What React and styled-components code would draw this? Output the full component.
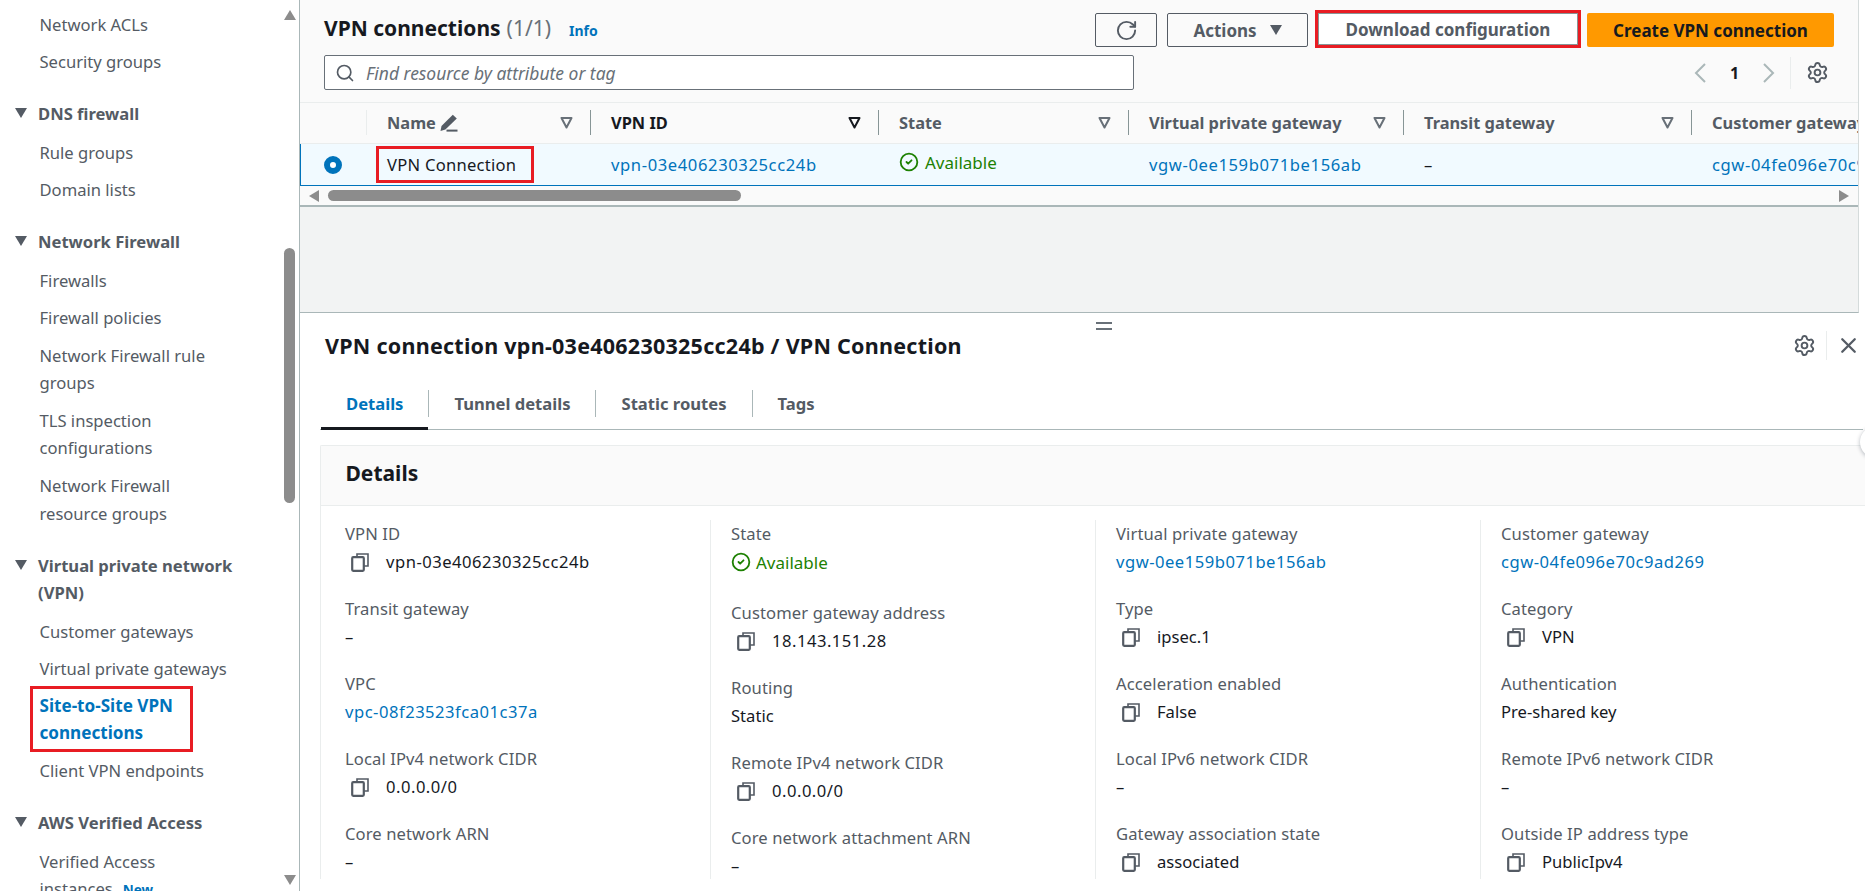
import React from "react";
import styled, { createGlobalStyle } from "styled-components";
import { Settings, RotateCw, Search, X, CircleCheck } from "lucide-react";

const GlobalStyle = createGlobalStyle`
  html, body {
    margin: 0;
    height: 100%;
    overflow: hidden;
    background: #fff;
    font-family: "Noto Sans", "Open Sans", sans-serif;
    font-size: 16.6px;
    color: #16191f;
  }
  * { box-sizing: border-box; }
`;

const tableColumns = "67px 224px 288px 250px 275px 288px 300px";

const navSections = [
  { items: ["Network ACLs", "Security groups"] },
  { title: "DNS firewall", items: ["Rule groups", "Domain lists"] },
  {
    title: "Network Firewall",
    items: ["Firewalls", "Firewall policies", "Network Firewall rule groups", "TLS inspection configurations", "Network Firewall resource groups"],
  },
  {
    title: "Virtual private network (VPN)",
    items: ["Customer gateways", "Virtual private gateways", { label: "Site-to-Site VPN connections", active: true }, "Client VPN endpoints"],
  },
  { title: "AWS Verified Access", items: [{ label: "Verified Access instances", isNew: true }] },
];

const detailColumns = [
  [
    { label: "VPN ID", value: "vpn-03e406230325cc24b", copy: true },
    { label: "Transit gateway", value: "–" },
    { label: "VPC", value: "vpc-08f23523fca01c37a", link: true },
    { label: "Local IPv4 network CIDR", value: "0.0.0.0/0", copy: true },
    { label: "Core network ARN", value: "–" },
  ],
  [
    { label: "State", value: "Available", status: true },
    { label: "Customer gateway address", value: "18.143.151.28", copy: true },
    { label: "Routing", value: "Static" },
    { label: "Remote IPv4 network CIDR", value: "0.0.0.0/0", copy: true },
    { label: "Core network attachment ARN", value: "–" },
  ],
  [
    { label: "Virtual private gateway", value: "vgw-0ee159b071be156ab", link: true },
    { label: "Type", value: "ipsec.1", copy: true },
    { label: "Acceleration enabled", value: "False", copy: true },
    { label: "Local IPv6 network CIDR", value: "–" },
    { label: "Gateway association state", value: "associated", copy: true },
  ],
  [
    { label: "Customer gateway", value: "cgw-04fe096e70c9ad269", link: true },
    { label: "Category", value: "VPN", copy: true },
    { label: "Authentication", value: "Pre-shared key" },
    { label: "Remote IPv6 network CIDR", value: "–" },
    { label: "Outside IP address type", value: "PublicIpv4", copy: true },
  ],
];

const hasManyDigits = (value) => (value.match(/\d/g) || []).length > 2;

const CopyIcon = () => (
  <CopySvg viewBox="0 0 18 20" width="18" height="20">
    <path d="M6 5V2h11v12h-4" fill="none" stroke="#545b64" strokeWidth="1.6" />
    <rect x="1.2" y="5.2" width="11.6" height="13.6" rx="1" fill="none" stroke="#545b64" strokeWidth="2.2" />
  </CopySvg>
);

const Caret = () => (
  <svg viewBox="0 0 12 10" width="12" height="10">
    <polygon points="0,0 12,0 6,10" fill="#545b64" />
  </svg>
);

const FilterIcon = ({ active }) => (
  <svg viewBox="0 0 13 12" width="13" height="12">
    <polygon points="1.5,1 11.5,1 6.5,10.5" fill="none" stroke={active ? "#16191f" : "#687078"} strokeWidth="2" strokeLinejoin="round" />
  </svg>
);

const PencilIcon = () => (
  <svg viewBox="0 0 18 18" width="18" height="18">
    <path d="M0.5 17l1-5L12.8 0.8l4 3.6L5.4 15.6z" fill="#545b64" />
    <rect x="6.5" y="15.6" width="11" height="2" fill="#545b64" />
  </svg>
);

const Chevron = ({ dir }) => (
  <svg viewBox="0 0 12 20" width="12" height="20">
    <polyline points={dir === "left" ? "11,1 2,10 11,19" : "1,1 10,10 1,19"} fill="none" stroke="#aab7b8" strokeWidth="2" />
  </svg>
);

const Triangle = ({ dir }) => {
  const points = { up: "6,0 12,10 0,10", down: "0,0 12,0 6,10", left: "10,0 10,12 0,6", right: "0,0 10,6 0,12" };
  const wide = dir === "up" || dir === "down";
  return (
    <svg viewBox={wide ? "0 0 12 10" : "0 0 10 12"} width={wide ? 12 : 10} height={wide ? 10 : 12}>
      <polygon points={points[dir]} fill="#8c8c8c" />
    </svg>
  );
};

const DetailField = ({ field }) => (
  <Field>
    <FieldLabel>{field.label}</FieldLabel>
    {field.status ? (
      <StatusValue>
        <CircleCheck size={20} color="#1d8102" strokeWidth={2.2} />
        Available
      </StatusValue>
    ) : (
      <FieldValue $link={field.link} $copy={field.copy} $digits={hasManyDigits(field.value)}>
        {field.copy && <CopyIcon />}
        <span>{field.value}</span>
      </FieldValue>
    )}
  </Field>
);

const App = () => {
  return (
    <Page>
      <GlobalStyle />
      <Sidebar>
        <NavList>
          {navSections.map((section, i) => (
            <NavSection key={i}>
              {section.title && (
                <NavHeader>
                  <CaretSlot><Caret /></CaretSlot>
                  <span>{section.title}</span>
                </NavHeader>
              )}
              {section.items.map((item) => {
                const label = item.label || item;
                return (
                  <NavItem key={label} $active={item.active}>
                    {label}
                    {item.isNew && <NewTag>New</NewTag>}
                  </NavItem>
                );
              })}
            </NavSection>
          ))}
        </NavList>
        <SideScroll>
          <Triangle dir="up" />
          <SideThumb />
          <Triangle dir="down" />
        </SideScroll>
      </Sidebar>

      <Main>
        <TopPane>
          <ListPanel>
            <PanelHeader>
              <HeaderRow>
                <Title>
                  VPN connections <Count>(1/1)</Count>
                  <InfoLink>Info</InfoLink>
                </Title>
                <Toolbar>
                  <OutlineButton $width={62}><RotateCw size={23} strokeWidth={2} /></OutlineButton>
                  <OutlineButton $width={141}>
                    Actions
                    <Caret />
                  </OutlineButton>
                  <OutlineButton $width={266} $flagged>Download configuration</OutlineButton>
                  <PrimaryButton>Create VPN connection</PrimaryButton>
                </Toolbar>
              </HeaderRow>
              <FilterRow>
                <SearchBox>
                  <Search size={20} color="#545b64" strokeWidth={2} />
                  <SearchInput>Find resource by attribute or tag</SearchInput>
                </SearchBox>
                <Pager>
                  <Chevron dir="left" />
                  <PageNumber>1</PageNumber>
                  <Chevron dir="right" />
                  <PagerDivider />
                  <Settings size={23} color="#545b64" strokeWidth={2} />
                </Pager>
              </FilterRow>
            </PanelHeader>

            <TableHead>
              <HeadCell><CellDivider $light /></HeadCell>
              <HeadCell>
                <HeadLabel>Name</HeadLabel>
                <PencilSlot><PencilIcon /></PencilSlot>
                <FilterSlot><FilterIcon /></FilterSlot>
                <CellDivider />
              </HeadCell>
              <HeadCell>
                <HeadLabel $sorted>VPN ID</HeadLabel>
                <FilterSlot><FilterIcon active /></FilterSlot>
                <CellDivider />
              </HeadCell>
              <HeadCell>
                <HeadLabel>State</HeadLabel>
                <FilterSlot><FilterIcon /></FilterSlot>
                <CellDivider />
              </HeadCell>
              <HeadCell>
                <HeadLabel>Virtual private gateway</HeadLabel>
                <FilterSlot><FilterIcon /></FilterSlot>
                <CellDivider />
              </HeadCell>
              <HeadCell>
                <HeadLabel>Transit gateway</HeadLabel>
                <FilterSlot><FilterIcon /></FilterSlot>
                <CellDivider />
              </HeadCell>
              <HeadCell>
                <HeadLabel>Customer gateway</HeadLabel>
              </HeadCell>
            </TableHead>

            <TableRow>
              <RadioCell><Radio /></RadioCell>
              <NameCell><NameFlag>VPN Connection</NameFlag></NameCell>
              <RowCell><RowLink>vpn-03e406230325cc24b</RowLink></RowCell>
              <RowCell>
                <RowStatus>
                  <CircleCheck size={20} color="#1d8102" strokeWidth={2.2} />
                  Available
                </RowStatus>
              </RowCell>
              <RowCell><RowLink>vgw-0ee159b071be156ab</RowLink></RowCell>
              <RowCell>–</RowCell>
              <RowCell><RowLink>cgw-04fe096e70c9ad269</RowLink></RowCell>
            </TableRow>

            <HScroll>
              <Triangle dir="left" />
              <HThumb />
              <Triangle dir="right" />
            </HScroll>
          </ListPanel>
        </TopPane>

        <DetailPanel>
          <DragHandle />
          <DetailHeader>
            <DetailTitle>VPN connection vpn-03e406230325cc24b / VPN Connection</DetailTitle>
            <DetailActions>
              <Settings size={23} color="#545b64" strokeWidth={2} />
              <ActionDivider />
              <X size={25} color="#545b64" strokeWidth={2.2} />
            </DetailActions>
          </DetailHeader>

          <Tabs>
            <Tab $active>Details</Tab>
            <TabDivider />
            <Tab>Tunnel details</Tab>
            <TabDivider />
            <Tab>Static routes</Tab>
            <TabDivider />
            <Tab>Tags</Tab>
          </Tabs>

          <Card>
            <CardHeader>Details</CardHeader>
            <CardGrid>
              {detailColumns.map((column, i) => (
                <DetailColumn key={i} $first={i === 0}>
                  {column.map((field) => (
                    <DetailField key={field.label} field={field} />
                  ))}
                </DetailColumn>
              ))}
            </CardGrid>
          </Card>
          <ToolsToggle />
        </DetailPanel>
      </Main>
    </Page>
  );
};

const Page = styled.div`
  display: flex;
  width: 1865px;
  height: 891px;
  overflow: hidden;
`;

const Sidebar = styled.aside`
  width: 300px;
  flex: none;
  height: 891px;
  display: flex;
  overflow: hidden;
  border-right: 1px solid #aab7b8;
`;

const NavList = styled.nav`
  flex: 1;
  padding: 11px 0 0 15px;
  height: 891px;
  overflow: hidden;
`;

const NavSection = styled.section`
  margin-bottom: 24.4px;
`;

const NavHeader = styled.div`
  display: flex;
  font-weight: 700;
  font-size: 16.6px;
  line-height: 27.5px;
  color: #545b64;
  margin-bottom: 11px;
  width: 230px;
`;

const CaretSlot = styled.span`
  width: 23px;
  flex: none;
  line-height: 24px;
`;

const NavItem = styled.div`
  padding-left: 24.5px;
  width: 216px;
  line-height: 27.8px;
  margin-bottom: 9.5px;
  color: ${(p) => (p.$active ? "#0073bb" : "#545b64")};
  font-weight: ${(p) => (p.$active ? 700 : 400)};
  font-size: ${(p) => (p.$active ? "17.1px" : "16.6px")};
  ${(p) =>
    p.$active &&
    `
    width: 163px;
    margin-left: 15px;
    padding-left: 9.5px;
    outline: 3px solid #e81c23;
    outline-offset: -3px;
    line-height: 27px;
    padding-top: 6px;
    padding-bottom: 6px;
    margin-top: -6px;
    margin-bottom: 4.5px;
  `}
`;

const NewTag = styled.span`
  color: #0073bb;
  font-weight: 700;
  font-size: 13.5px;
  margin-left: 10px;
`;

const SideScroll = styled.div`
  width: 15px;
  flex: none;
  margin-right: 2px;
  display: flex;
  flex-direction: column;
  align-items: center;
  padding-top: 10px;
`;

const SideThumb = styled.div`
  width: 11px;
  height: 255px;
  margin-top: 228px;
  border-radius: 6px;
  background: #8c8c8c;
  margin-bottom: 372px;
`;

const Main = styled.main`
  flex: 1;
  min-width: 0;
  display: flex;
  flex-direction: column;
`;

const TopPane = styled.div`
  height: 313px;
  flex: none;
  background: #f2f3f3;
  width: 1559px;
  border-right: 1px solid #d5dbdb;
  border-bottom: 1px solid #aab7b8;
`;

const ListPanel = styled.div`
  background: #fafafa;
  border-bottom: 2px solid #aab7b8;
  overflow: hidden;
`;

const PanelHeader = styled.div`
  height: 103px;
  padding: 13px 24px 0 24px;
  border-bottom: 1px solid #eaeded;
`;

const HeaderRow = styled.div`
  display: flex;
  justify-content: space-between;
  align-items: center;
  height: 34px;
`;

const Title = styled.h1`
  margin: -2px 0 0;
  font-size: 21px;
  font-weight: 700;
  line-height: 30px;
  display: flex;
  align-items: baseline;
  gap: 6px;
`;

const Count = styled.span`
  font-weight: 400;
  color: #687078;
`;

const InfoLink = styled.a`
  font-size: 14px;
  font-weight: 700;
  color: #0073bb;
  margin-left: 12px;
`;

const Toolbar = styled.div`
  display: flex;
  align-items: center;
  gap: 10px;
`;

const OutlineButton = styled.button`
  width: ${(p) => p.$width}px;
  height: 34px;
  display: flex;
  align-items: center;
  justify-content: center;
  gap: 13px;
  background: ${(p) => (p.$flagged ? "#fff" : "#fafafa")};
  border: 1px solid #545b64;
  border-radius: 2px;
  color: #545b64;
  font-family: inherit;
  font-size: 17px;
  font-weight: 700;
  padding: 0;
  ${(p) =>
    p.$flagged &&
    `
    height: 38px;
    margin: -3px -4px 0 -3px;
    padding-top: 2px;
    border: 3px solid #e81c23;
    border-radius: 0;
    box-shadow: inset 0 0 0 1px #879596;
  `}
`;

const PrimaryButton = styled.button`
  width: 247px;
  height: 34px;
  background: #ff9900;
  border: none;
  border-radius: 2px;
  color: #16191f;
  font-family: inherit;
  font-size: 17px;
  font-weight: 700;
`;

const FilterRow = styled.div`
  display: flex;
  align-items: center;
  margin-top: 8px;
  height: 35px;
`;

const SearchBox = styled.div`
  width: 810px;
  height: 35px;
  display: flex;
  align-items: center;
  gap: 11px;
  padding-left: 10px;
  background: #fff;
  border: 1px solid #687078;
  border-radius: 2px;
`;

const SearchInput = styled.span`
  font-style: italic;
  color: #687078;
  font-size: 17.45px;
`;

const Pager = styled.div`
  margin-left: auto;
  margin-right: 5px;
  display: flex;
  align-items: center;
`;

const PageNumber = styled.span`
  width: 57px;
  text-align: center;
  font-weight: 700;
  color: #16191f;
  font-size: 16px;
`;

const PagerDivider = styled.span`
  width: 1px;
  height: 32px;
  background: #eaeded;
  margin: 0 15px 0 15px;
`;

const TableHead = styled.div`
  display: grid;
  grid-template-columns: ${tableColumns};
  height: 41px;
  background: #fafafa;
  border-bottom: 1px solid #eaeded;
`;

const HeadCell = styled.div`
  display: flex;
  align-items: center;
  padding-left: 20px;
  padding-bottom: 1px;
  min-width: 0;
  white-space: nowrap;
`;

const HeadLabel = styled.span`
  font-weight: 700;
  font-size: 16.4px;
  color: ${(p) => (p.$sorted ? "#16191f" : "#545b64")};
`;

const PencilSlot = styled.span`
  display: flex;
  margin-left: 4px;
`;

const FilterSlot = styled.span`
  display: flex;
  margin-left: auto;
  margin-right: 17px;
`;

const CellDivider = styled.span`
  width: 1px;
  height: 25px;
  flex: none;
  margin-left: ${(p) => (p.$light ? "auto" : 0)};
  background: ${(p) => (p.$light ? "#eaeded" : "#879596")};
`;

const TableRow = styled.div`
  display: grid;
  grid-template-columns: ${tableColumns};
  height: 42px;
  background: #f1faff;
  border-bottom: 1px solid #0073bb;
  box-shadow: inset 1px 0 0 #0073bb;
  white-space: nowrap;
`;

const RowCell = styled.div`
  display: flex;
  align-items: center;
  padding-left: 20px;
  min-width: 0;
`;

const RadioCell = styled(RowCell)`
  padding-left: 24px;
`;

const NameCell = styled(RowCell)`
  padding-left: 9px;
`;

const Radio = styled.span`
  width: 18px;
  height: 18px;
  border-radius: 50%;
  border: 6px solid #0073bb;
  background: #fff;
`;

const NameFlag = styled.span`
  display: inline-flex;
  align-items: center;
  height: 37px;
  width: 158px;
  padding-left: 8px;
  letter-spacing: 0.25px;
  border: 3px solid #e81c23;
`;

const RowLink = styled.a`
  color: #0073bb;
  letter-spacing: 0.6px;
`;

const RowStatus = styled.span`
  display: flex;
  align-items: center;
  gap: 6px;
  color: #1d8102;
  font-size: 17px;
  margin-top: -5px;
`;

const HScroll = styled.div`
  height: 19px;
  display: flex;
  align-items: center;
  padding: 0 9px;
`;

const HThumb = styled.div`
  width: 413px;
  height: 11px;
  border-radius: 6px;
  background: #8c8c8c;
  margin: 0 auto 0 9px;
`;

const DetailPanel = styled.div`
  position: relative;
  flex: 1;
  min-height: 0;
  background: #fff;
`;

const DragHandle = styled.div`
  position: absolute;
  left: 796px;
  top: 9px;
  width: 16px;
  height: 8px;
  border-top: 2.5px solid #687078;
  border-bottom: 2.5px solid #687078;
`;

const DetailHeader = styled.div`
  display: flex;
  align-items: center;
  justify-content: space-between;
  height: 67px;
  padding: 0 4px 2px 25px;
`;

const DetailTitle = styled.h2`
  margin: 0;
  font-size: 21.5px;
  letter-spacing: 0.25px;
  font-weight: 700;
`;

const DetailActions = styled.div`
  display: flex;
  align-items: center;
`;

const ActionDivider = styled.span`
  width: 1px;
  height: 29px;
  background: #eaeded;
  margin: 0 9px 0 10px;
`;

const Tabs = styled.div`
  display: flex;
  align-items: center;
  height: 50px;
  margin: 0 2px 0 20px;
  border-bottom: 1px solid #aab7b8;
`;

const Tab = styled.div`
  height: 50px;
  line-height: 48px;
  padding: 0 25px;
  font-weight: 700;
  font-size: 16.6px;
  color: ${(p) => (p.$active ? "#0073bb" : "#545b64")};
  ${(p) => p.$active && "box-shadow: inset 0 -3px 0 #16191f; margin-left: 1px;"}
`;

const TabDivider = styled.span`
  width: 1px;
  height: 27px;
  margin-bottom: 3px;
  background: #aab7b8;
`;

const Card = styled.section`
  margin: 15px 0 0 20px;
  border-top: 1px solid #eaeded;
  border-left: 1px solid #eaeded;
  border-radius: 2px 0 0 0;
`;

const CardHeader = styled.div`
  height: 60px;
  line-height: 54px;
  padding-left: 24.5px;
  font-size: 21px;
  font-weight: 700;
  background: #fafafa;
  border-bottom: 1px solid #eaeded;
`;

const CardGrid = styled.div`
  display: grid;
  grid-template-columns: 389px 385px 385px 385px;
  padding-top: 14px;
`;

const DetailColumn = styled.div`
  height: 359px;
  padding-left: ${(p) => (p.$first ? "24px" : "20px")};
  border-left: ${(p) => (p.$first ? "none" : "1px solid #eaeded")};
`;

const Field = styled.div`
  margin-bottom: 19px;
`;

const FieldLabel = styled.div`
  line-height: 28px;
  color: #545b64;
  white-space: nowrap;
  letter-spacing: 0.1px;
`;

const FieldValue = styled.div`
  display: flex;
  align-items: center;
  line-height: 28px;
  white-space: nowrap;
  gap: 17px;
  padding-left: ${(p) => (p.$copy ? "6px" : 0)};
  letter-spacing: ${(p) => (p.$digits ? "0.5px" : 0)};
  color: ${(p) => (p.$link ? "#0073bb" : "#16191f")};
`;

const CopySvg = styled.svg`
  flex: none;
`;

const StatusValue = styled.div`
  display: flex;
  align-items: center;
  gap: 5px;
  height: 31.5px;
  padding-bottom: 3.5px;
  font-size: 17px;
  color: #1d8102;
`;

const ToolsToggle = styled.div`
  position: absolute;
  left: 1560px;
  top: 113px;
  width: 32px;
  height: 32px;
  border-radius: 50%;
  background: #fff;
  box-shadow: 0 1px 4px rgba(0, 21, 41, 0.3);
`;

export default App;
